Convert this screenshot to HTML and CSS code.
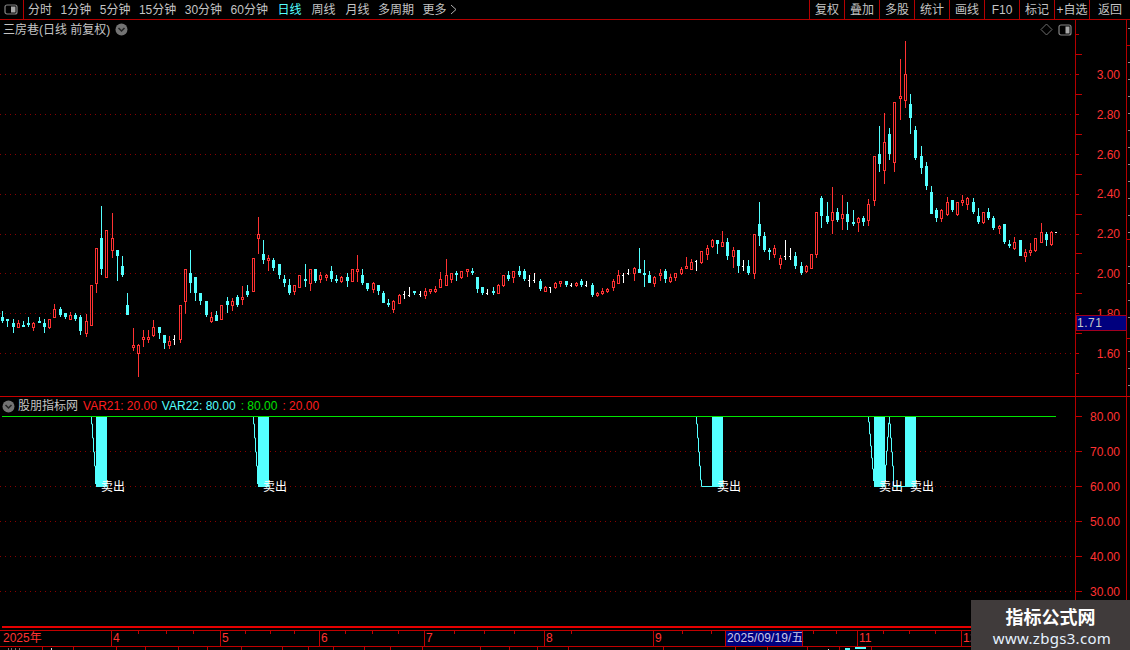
FILE: index.html
```html
<!DOCTYPE html>
<html lang="zh">
<head>
<meta charset="utf-8">
<title>三房巷</title>
<link rel="stylesheet" href="styles.css">
</head>
<body>
<div class="app">
  <header class="toolbar">
    <div class="tool-icon">
      <svg width="14" height="11" viewBox="0 0 14 11"><rect x="1" y="1" width="12" height="9" rx="2" class="ico-line"/><rect x="7" y="2.5" width="4.5" height="6" class="ico-fill"/></svg>
    </div>
    <nav class="periods">
      <span>分时</span><span>1分钟</span><span>5分钟</span><span>15分钟</span><span>30分钟</span><span>60分钟</span>
      <span class="active">日线</span><span class="wide">周线</span><span class="wide">月线</span><span>多周期</span><span>更多</span>
      <svg class="more" width="8" height="11" viewBox="0 0 8 11"><path d="M1 1l5 4.5-5 4.5" class="ico-thin"/></svg>
    </nav>
    <div class="actions">
      <span>复权</span><span>叠加</span><span>多股</span><span>统计</span><span>画线</span><span>F10</span><span>标记</span><span>+自选</span><span class="last">返回</span>
    </div>
  </header>

  <section class="panel main-panel">
    <div class="plot">
      <svg id="kline" class="canvas" viewBox="0 20 1075 376" width="1075" height="376"></svg>
      <div class="plot-head">
        <span class="stock">三房巷(日线 前复权)</span>
        <svg width="13" height="13" viewBox="0 0 13 13"><circle cx="6.5" cy="6.5" r="6" class="disc"/><path d="M3.5 5l3 3 3-3" class="chev"/></svg>
        <span class="head-fill"></span>
        <svg width="13" height="13" viewBox="0 0 13 13"><path d="M6.5 1l5.500 5.500-5.500 5.500-5.500-5.500z" class="ico-dim"/></svg>
        <svg class="split" width="14" height="12" viewBox="0 0 14 12"><rect x="1" y="1" width="12" height="10" rx="2" class="ico-line"/><rect x="7.5" y="2.5" width="4" height="7" class="ico-fill"/></svg>
      </div>
    </div>
    <aside class="axis main-axis">
      <svg class="canvas" viewBox="0 0 55 376" width="55" height="376">
        <path class="tick" d="M0 14.500h3M0 34.500h6M0 54.500h3M0 74.500h6M0 94.500h3M0 114.500h6M0 134.500h3M0 154.500h6M0 174.500h3M0 194.500h6M0 214.500h3M0 233.500h6M0 253.500h3M0 273.500h6M0 293.500h3M0 313.500h6M0 333.500h3M0 353.500h3M50 25.500h5M50 219.500h5M50 318.500h5"/>
        <path class="ruler-mark" d="M52 8.500h3M52 42.500h3M52 59.500h3M52 76.500h3M52 93.500h3M52 110.500h3M52 127.500h3M52 144.500h3M52 161.500h3M52 178.500h3M52 195.500h3M52 212.500h3M52 246.500h3M52 263.500h3M52 280.500h3M52 297.500h3M52 331.500h3M52 348.500h3M52 365.500h3"/>
      </svg>
      <div class="labels">
        <span>3.00</span><span>2.80</span><span>2.60</span><span>2.40</span><span>2.20</span><span>2.00</span><span>1.80</span><span>1.60</span>
      </div>
      <div class="price-tag">1.71</div>
    </aside>
  </section>

  <section class="panel sub-panel">
    <div class="plot">
      <svg class="canvas" viewBox="0 397 1075 229" width="1075" height="229">
        <path class="grid" d="M0 451.500H1075M0 486.500H1075M0 521.500H1075M0 556.500H1075M0 591.500H1075"/>
        <path class="limit" d="M2 416.500H1056"/>
        <g class="bars">
          <rect x="96" y="417" width="11" height="70"/>
          <rect x="258" y="417" width="11" height="70"/>
          <rect x="712" y="417" width="11" height="70"/>
          <rect x="874" y="417" width="11" height="70"/>
          <rect x="905" y="417" width="11" height="70"/>
          <rect x="95" y="466" width="1" height="18"/>
          <rect x="257" y="466" width="1" height="18"/>
          <rect x="873" y="469" width="1" height="12"/>
          <rect x="885" y="465" width="1" height="16"/>
        </g>
        <path class="trail" d="M91.500 417V424H92.500V438H93.500V452H94.500V466H95.500"/>
        <path class="trail" d="M253.500 417V424H254.500V438H255.500V452H256.500V466H257.500"/>
        <path class="trail" d="M696.500 417V424H697.500V438H698.500V452H699.500V466H700.500V480H701.500V486.500H712"/>
        <path class="trail" d="M868.500 417V422H869.500V434H870.500V446H871.500V458H872.500V469H873.500"/>
        <path class="trail" d="M889.500 417V423H888.500V437H887.500V451H886.500V465H885.500"/>
        <path class="trail" d="M889.500 417V424H890.500V438H891.500V452H892.500V466H893.500V480H893.500V486.500H905"/>
        <g class="sell">
          <text x="101" y="491">卖出</text>
          <text x="263" y="491">卖出</text>
          <text x="717" y="491">卖出</text>
          <text x="879" y="491">卖出</text>
          <text x="910" y="491">卖出</text>
        </g>
      </svg>
      <div class="sub-head">
        <svg width="13" height="13" viewBox="0 0 13 13"><circle cx="6.5" cy="6.500" r="6" class="disc"/><path d="M3.5 5l3 3 3-3" class="chev"/></svg>
        <span class="ind-name">股朋指标网</span>
        <span class="red">VAR21: 20.00</span>
        <span class="cyan">VAR22: 80.00</span>
        <span class="green">: 80.00</span>
        <span class="red">: 20.00</span>
      </div>
    </div>
    <aside class="axis sub-axis">
      <svg class="canvas" viewBox="0 0 55 229" width="55" height="229">
        <path class="tick" d="M0 19.500h6M0 54.500h6M0 89.500h6M0 124.500h6M0 159.500h6M0 194.500h6"/>
      </svg>
      <div class="labels sub-labels">
        <span>80.00</span><span>70.00</span><span>60.00</span><span>50.00</span><span>40.00</span><span>30.00</span>
      </div>
    </aside>
  </section>

  <div class="baseline"></div>

  <footer class="timeline">
    <span>2025年</span><span>4</span><span>5</span><span>6</span><span>7</span><span>8</span><span>9</span><span class="blank"></span><span class="date">2025/09/19/五</span><span class="blank"></span><span>11</span><span>12</span>
    <svg class="canvas" viewBox="0 0 1130 16" width="1130" height="16">
      <path class="tick" d="M138.500 0v3M166.500 0v3M193.500 0v3M245.500 0v3M270.500 0v3M294.500 0v3M345.500 0v3M372.500 0v3M398.500 0v3M454.500 0v3M484.500 0v3M514.500 0v3M571.500 0v3M682.500 0v3M711.500 0v3M813.500 0v3M836.500 0v3M883.500 0v3M909.500 0v3M935.500 0v3"/>
    </svg>
  </footer>
  <div class="strip">
    <svg width="1130" height="4" viewBox="0 0 1130 4">
      <path class="tick" d="M42.500 0v4M73.500 0v4M116.500 0v4M145.500 0v4M178.500 0v4M207.500 0v4M241.500 0v4M282.500 0v4M308.500 0v4M333.500 0v4M364.500 0v4M390.500 0v4M422.500 0v4M480.500 0v4M509.500 0v4M537.500 0v4M568.500 0v4M663.500 0v4M735.500 0v4M767.500 0v4M807.500 0v4M839.500 0v4M871.500 0v4"/>
      <path class="strip-text" d="M8 2h1M11 2h1M15 2h1M19 2h1M51.500 1v3M828.500 2v2"/>
      <path class="strip-cyan" d="M845 2h5M855 1h11"/>
    </svg>
  </div>

  <aside class="watermark">
    <strong>指标公式网</strong>
    <span>www.zbgs3.com</span>
  </aside>
</div>
<script src="chart.js"></script>
</body>
</html>
```

FILE: styles.css
```css
* { box-sizing: border-box; }
html, body { margin: 0; padding: 0; background: #000; overflow: hidden; }
body { width: 1130px; height: 650px; font: 12px/1 "Liberation Sans", "Noto Sans CJK SC", sans-serif; color: #c4c4c4; }
.app { position: relative; width: 1130px; height: 650px; display: flex; flex-direction: column; }
svg { display: block; }

.toolbar { height: 20px; display: flex; border-bottom: 1px solid #b40000; }
.tool-icon { width: 24px; border-right: 1px solid #b40000; display: flex; align-items: center; justify-content: center; }
.tool-icon svg { margin-right: 1px; }
.periods { display: flex; align-items: center; gap: 8.5px; padding-left: 4px; flex: 1; }
.periods .wide { margin-left: 1.5px; }
.periods .active { color: #54ffff; margin-left: 1px; }
.periods .more { margin-left: -5px; }
.actions { display: flex; height: 19px; }
.actions span { width: 35px; border-left: 1px solid #b40000; display: flex; align-items: center; justify-content: center; white-space: nowrap; }
.actions span.last { width: 41px; }

.ico-line { fill: none; stroke: #858585; stroke-width: 1.2; }
.ico-fill { fill: #a8a8a8; }
.ico-thin { fill: none; stroke: #b0b0b0; stroke-width: 1; }
.ico-dim { fill: none; stroke: #6e6e6e; stroke-width: 1; }
.disc { fill: #737373; }
.chev { fill: none; stroke: #222; stroke-width: 1.5; }

.panel { display: flex; }
.main-panel { height: 376px; }
.sub-panel { height: 230px; border-top: 1px solid #c80000; }
.plot { position: relative; width: 1075px; }
.canvas { position: absolute; left: 0; top: 0; }
.plot-head { position: relative; height: 19px; display: flex; align-items: center; gap: 5px; padding: 0 2px 0 3px; }
.head-fill { flex: 1; }
.split { margin: 0 1px 0 0; }
.sub-head { position: relative; height: 18px; display: flex; align-items: center; gap: 5px; padding-left: 2px; }
.ind-name { margin-left: -2px; }
.red { color: #ff1e1e; }
.cyan { color: #54ffff; }
.green { color: #00e000; }

.axis { position: relative; width: 55px; border-left: 1px solid #b40000; }
.axis::after { content: ""; position: absolute; top: 0; bottom: 0; left: 50px; width: 1px; background: #b40000; }
.labels { position: absolute; top: 35px; right: 10px; display: grid; grid-auto-rows: 39.800px; justify-items: end; color: #ff3232; }
.labels span { height: 39.800px; line-height: 40px; }
.sub-labels { top: 0; grid-auto-rows: 35px; }
.sub-labels span { height: 35px; line-height: 40px; }
.price-tag { position: absolute; z-index: 1; left: 0; top: 295px; width: 51px; height: 16px; background: #00007e; border: 1px solid #a00020; color: #c8c8c8; line-height: 15px; letter-spacing: .5px; }

.grid { fill: none; stroke: #8a0000; stroke-width: 1; stroke-dasharray: 1 4; }
.limit { stroke: #00e600; stroke-width: 1; }
.bars rect { fill: #54ffff; }
.trail { fill: none; stroke: #54ffff; stroke-width: 1; }
.sell text { fill: #fff; font-size: 12px; font-family: "Noto Sans CJK SC", sans-serif; }
.tick { fill: none; stroke: #c00000; stroke-width: 1; }
.ruler-mark { fill: none; stroke: #8c8c8c; stroke-width: 1; }

.baseline { height: 4px; margin-left: 2px; border-top: 2px solid #e60000; }
.timeline { position: relative; height: 17px; display: grid; grid-template-columns: 111px 109px 99px 105px 120px 109px 72px 0 77px 55px 104px 1fr; border-top: 1px solid #c00000; border-bottom: 1px solid #c00000; color: #ff3232; }
.timeline span { border-left: 1px solid #c00000; padding-left: 1px; line-height: 15px; white-space: nowrap; }
.timeline span:first-child { border-left: 0; padding-left: 3px; }
.timeline .blank { padding: 0; }
.timeline .blank:first-of-type { border: 0; }
.timeline .date { background: #00007e; color: #c8c8e8; letter-spacing: .1px; }
.strip { height: 3px; overflow: hidden; }
.strip-text { stroke: #ddd; fill: none; }
.strip-cyan { stroke: #54ffff; fill: none; stroke-width: 2; }

.watermark { position: absolute; right: 0; bottom: 0; width: 159px; height: 50px; background: #403b3b; display: flex; flex-direction: column; align-items: center; padding-top: 6px; gap: 3px; color: #fff; }
.watermark strong { font: 700 18px/20px "Noto Sans CJK SC", sans-serif; }
.watermark span { font: 15px/18px "Noto Sans", sans-serif; color: #e6f2ff; letter-spacing: .3px; margin-left: 3px; }
```

FILE: chart.js
```js
// Daily candles: [pixel x * 3, high, body top, body bottom, low, kind] in segment coordinates.
var segments = [
  { y0: 190, x0: 0, rows: [
    [7,363,381,393,399,'c'],[22,387,387,393,411,'c'],[40,387,399,411,429,'c'],[55,390,399,414,414,'r'],[70,393,405,411,411,'c'],[85,381,399,405,411,'c'],[100,396,399,414,423,'r'],[118,381,393,399,399,'c'],[133,387,399,411,429,'c'],[148,387,387,414,417,'r'],
    [163,342,357,384,384,'r'],[181,351,357,375,381,'c'],[196,369,369,381,387,'c'],[211,366,375,390,390,'r'],[226,369,375,387,393,'c'],[241,375,381,423,435,'c'],[259,372,393,432,441,'r'],[274,285,285,408,408,'r'],[289,174,174,282,309,'r'],[304,48,144,237,255,'c'],
    [319,120,120,264,264,'r'],[337,69,144,183,204,'r'],[352,180,180,198,273,'c'],[367,198,228,255,261,'c'],[382,309,345,375,375,'c'],[400,414,465,474,483,'r'],[415,462,465,492,561,'r'],[430,420,441,450,471,'r'],[445,420,441,450,459,'r'],[460,390,411,438,441,'r'],
    [478,411,411,429,447,'c'],[493,435,435,459,477,'c'],[508,438,453,468,477,'r'],[523,435,447,447,465,'w'],[541,345,345,450,459,'r'],[556,237,237,336,372,'r'],[571,180,249,279,309,'c'],[586,261,261,309,333,'c'],[601,309,309,333,345,'c'],[619,333,333,375,381,'c'],
    [634,366,381,396,399,'r'],[649,363,375,393,393,'c'],[664,345,345,390,390,'r'],[682,321,333,345,369,'c'],[697,324,333,348,363,'r'],[712,315,321,345,351,'c'],[727,288,321,330,345,'r'],[742,285,303,315,321,'c'],[760,204,204,306,306,'r'],[775,81,132,147,192,'r'],
    [790,150,192,210,222,'c'],[805,195,204,213,243,'r'],[820,204,210,234,243,'c'],[838,222,222,255,267,'c'],[853,255,267,279,291,'c'],[868,267,285,309,315,'c'],[883,285,285,306,315,'r'],[898,255,255,294,294,'r']
  ]},
  { y0: 230, x0: 300, rows: [
    [16,102,147,153,171,'c'],[31,117,117,162,183,'r'],[46,117,117,153,159,'c'],[61,126,135,150,159,'r'],[79,132,135,144,153,'r'],[94,108,123,147,156,'c'],[109,135,147,153,159,'c'],[124,138,141,156,159,'r'],[142,129,141,153,171,'c'],[157,117,117,156,156,'r'],
    [172,75,117,126,156,'r'],[187,117,135,159,165,'c'],[202,159,159,177,183,'c'],[220,156,159,180,189,'r'],[235,165,165,183,195,'c'],[250,183,189,219,219,'c'],[265,207,219,225,231,'c'],[280,210,213,240,249,'r'],[298,192,195,222,222,'r'],[313,183,192,192,207,'w'],
    [328,171,195,195,201,'w'],[343,183,183,189,195,'c'],[361,183,192,192,201,'w'],[376,174,183,198,207,'r'],[391,177,177,186,192,'r'],[406,168,177,186,189,'r'],[421,126,147,174,174,'r'],[439,87,135,168,168,'r'],[454,129,129,150,159,'r'],[469,123,129,135,153,'c'],
    [484,123,123,144,147,'r'],[502,117,117,126,141,'r'],[517,114,123,129,135,'c'],[532,141,141,177,189,'c'],[547,171,171,189,195,'c'],[562,177,189,189,195,'w'],[580,171,183,189,195,'c'],[595,162,165,192,192,'r'],[610,135,135,168,171,'r'],[625,123,135,147,153,'c'],
    [640,123,123,144,159,'r'],[658,108,123,135,141,'c'],[673,117,123,147,153,'c'],[688,135,150,150,171,'w'],[703,129,150,150,159,'w'],[721,147,153,177,183,'c'],[736,168,171,186,186,'r'],[751,171,171,171,189,'w'],[766,156,159,174,177,'r'],[781,153,153,162,171,'r'],
    [799,153,153,165,171,'c'],[814,159,165,165,171,'w'],[829,156,159,168,171,'r'],[844,147,153,165,171,'c'],[859,153,165,165,171,'w'],[877,159,165,195,201,'c'],[892,186,189,198,201,'r'],[907,174,183,192,195,'r'],[922,174,177,186,189,'r'],[940,147,153,174,183,'r'],
    [955,120,135,162,162,'r'],[970,129,135,135,159,'w'],[985,117,129,129,135,'w'],[1003,111,114,132,153,'r'],[1018,54,117,129,129,'c'],[1033,90,129,135,171,'c'],[1048,123,135,159,159,'c'],[1063,138,141,162,171,'r'],[1081,117,129,138,153,'r'],[1096,117,123,147,159,'c'],
    [1111,132,141,156,159,'r'],[1126,129,129,144,153,'r'],[1144,111,117,132,135,'r'],[1159,81,108,117,117,'r'],[1174,87,96,120,120,'r'],[1189,90,93,93,123,'w']
  ]},
  { y0: 30, x0: 680, rows: [
    [64,663,663,699,702,'r'],[82,645,654,675,690,'r'],[97,627,630,651,654,'r'],[112,630,630,642,672,'c'],[127,603,636,651,651,'r'],[142,624,636,678,690,'c'],[160,651,660,681,714,'r'],[175,660,660,708,729,'c'],[190,690,708,708,723,'w'],[205,690,708,729,735,'c'],
    [223,612,612,732,747,'r'],[238,516,582,618,648,'c'],[253,606,618,660,666,'c'],[268,654,660,666,690,'c'],[283,645,654,675,684,'r'],[301,675,684,705,717,'r'],[316,630,678,678,690,'w'],[331,654,678,678,690,'w'],[346,666,678,708,717,'c'],[364,696,708,729,735,'c'],
    [379,705,708,726,729,'r'],[394,672,672,717,717,'r'],[409,546,546,675,684,'r'],[424,498,504,558,594,'c'],[442,516,558,576,582,'c'],[457,471,546,573,612,'r'],[472,534,546,570,576,'c'],[487,495,552,567,600,'r'],[502,516,552,576,600,'c'],[520,540,576,582,588,'c'],
    [535,561,564,579,606,'r'],[550,558,564,576,588,'c'],[565,507,522,573,588,'r'],[583,378,378,513,528,'r'],[598,288,372,402,426,'c'],[613,249,336,423,462,'r'],[628,294,312,372,390,'c'],[643,216,216,399,426,'r'],[661,87,198,207,270,'r'],[676,33,132,213,234,'r'],
    [691,192,222,264,312,'c'],[706,288,300,384,390,'c'],[724,348,378,414,432,'c'],[739,396,408,468,480,'c'],[754,468,486,552,552,'c'],[769,534,540,564,576,'c'],[784,537,540,567,576,'r'],[802,501,516,555,558,'r'],[817,510,510,540,546,'c'],[832,516,516,555,558,'r'],
    [847,495,510,519,528,'r'],[862,501,504,525,540,'r'],[880,504,516,546,552,'c'],[895,534,558,576,582,'c'],[910,546,546,579,582,'r'],[925,534,546,564,570,'c'],[940,558,564,594,600,'c'],[958,585,588,597,612,'r'],[973,582,582,636,642,'c'],[988,630,642,648,654,'c'],
    [1003,621,636,657,660,'r'],[1021,630,630,678,678,'c'],[1036,657,666,681,696,'r'],[1051,639,660,669,678,'r'],[1066,624,624,663,666,'r'],[1084,579,606,639,639,'r'],[1099,606,612,630,648,'c'],[1114,603,606,645,648,'r']
  ]}
];

var NS = 'http://www.w3.org/2000/svg';
var svg = document.getElementById('kline');
var RED = '#ff3232', CYAN = '#54ffff', WHITE = '#ffffff';

function add(tag, attrs) {
  var el = document.createElementNS(NS, tag);
  for (var k in attrs) el.setAttribute(k, attrs[k]);
  el.setAttribute('shape-rendering', 'crispEdges');
  svg.appendChild(el);
}
function vline(x, y1, y2, color) {
  if (y2 > y1) add('rect', { x: x, y: y1, width: 1, height: y2 - y1, fill: color });
}

add('path', { d: 'M0 74.500H1075M0 114.500H1075M0 154.500H1075M0 194.500H1075M0 234.500H1075M0 273.500H1075M0 313.500H1075M0 353.500H1075', 'class': 'grid' });

segments.forEach(function (seg) {
  seg.rows.forEach(function (r) {
    var x = seg.x0 + Math.floor(r[0] / 3);
    var hi = seg.y0 + Math.round(r[1] / 3), top = seg.y0 + Math.round(r[2] / 3);
    var bot = seg.y0 + Math.round(r[3] / 3), lo = seg.y0 + Math.round(r[4] / 3);
    var kind = r[5];
    if (kind === 'w') {
      vline(x, hi, lo, WHITE);
      add('rect', { x: x - 1, y: top, width: 1, height: 1, fill: WHITE });
    } else if (kind === 'c') {
      vline(x, hi, lo, CYAN);
      add('rect', { x: x - 1, y: top, width: 3, height: bot - top, fill: CYAN });
    } else {
      vline(x, hi, top, RED);
      vline(x, bot, lo, RED);
      add('rect', { x: x - 0.5, y: top + 0.5, width: 2, height: Math.max(bot - top - 1, 1), fill: 'none', stroke: RED, 'stroke-width': 1 });
    }
  });
});
add('rect', { x: 1055, y: 232, width: 2, height: 1, fill: WHITE });
```
